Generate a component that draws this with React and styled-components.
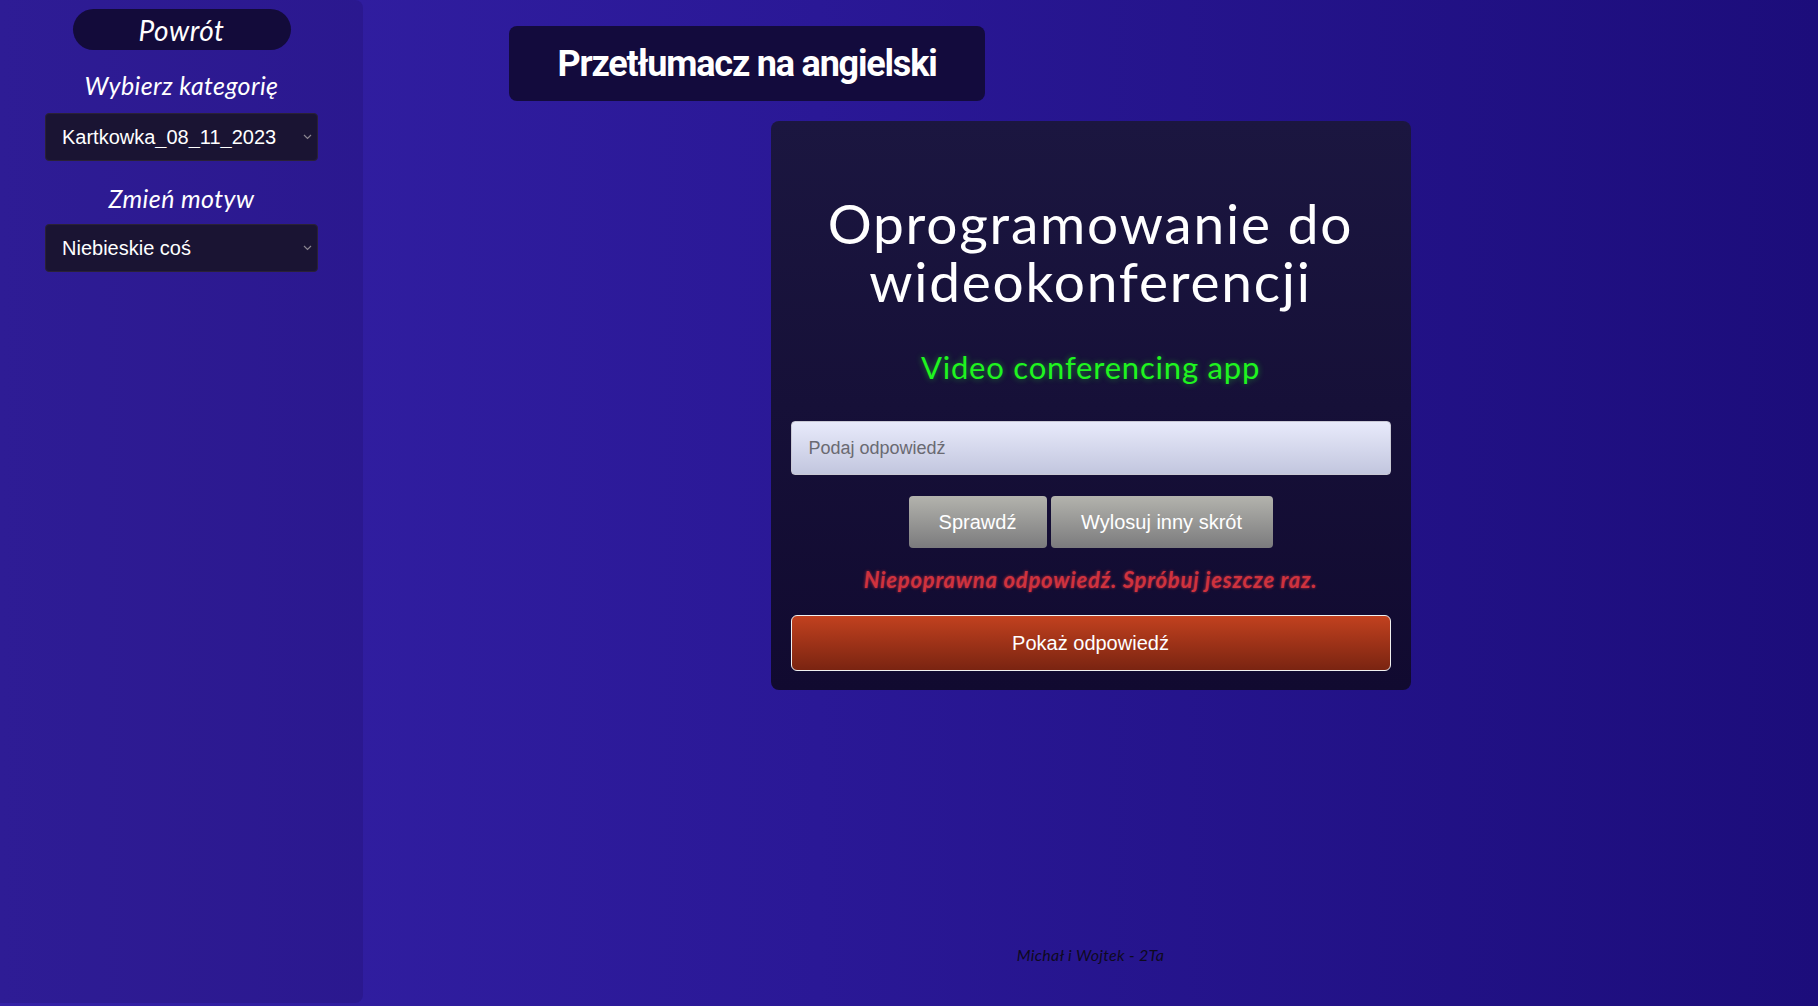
import React, { useState } from 'react';
import styled, { createGlobalStyle } from 'styled-components';

const GlobalStyle = createGlobalStyle`
  html, body {
    margin: 0;
    padding: 0;
    height: 100%;
  }

  body {
    background: linear-gradient(90deg, #3421a6 0%, #2a1896 45%, #1c0d7b 100%);
    font-family: "Liberation Sans", Arial, sans-serif;
    overflow: hidden;
  }
`;

const display = `"Lato", "Noto Sans", sans-serif`;

const Layout = styled.div`
  display: flex;
  height: 100vh;
`;

const Sidebar = styled.aside`
  flex: 0 0 363px;
  height: calc(100vh - 3px);
  display: flex;
  flex-direction: column;
  align-items: center;
  background: rgba(20, 8, 70, 0.18);
  border-radius: 0 8px 8px 0;
`;

const BackButton = styled.button`
  margin-top: 9px;
  width: 218px;
  height: 41px;
  border: none;
  border-radius: 21px;
  background: #130b3a;
  color: #ffffff;
  font-family: ${display};
  font-style: italic;
  font-size: 28px;
  letter-spacing: 0.5px;
  cursor: pointer;
`;

const SideLabel = styled.h3`
  margin: ${p => p.$top}px 0 ${p => p.$bottom}px;
  height: 30px;
  line-height: 30px;
  color: #ffffff;
  font-family: ${display};
  font-style: italic;
  font-weight: 400;
  font-size: 25px;
  letter-spacing: 0.4px;
`;

const SelectWrap = styled.div`
  position: relative;
  width: 273px;
  height: 48px;

  svg {
    position: absolute;
    right: 6px;
    top: 21px;
    pointer-events: none;
  }
`;

const Select = styled.select`
  appearance: none;
  width: 100%;
  height: 100%;
  padding: 0 16px;
  background: #1a1433;
  border: 1px solid #2a2136;
  border-radius: 4px;
  color: #ffffff;
  font-family: "Liberation Sans", Arial, sans-serif;
  font-size: 20px;
  outline: none;
`;

const Main = styled.main`
  flex: 1;
  display: flex;
  flex-direction: column;
  align-items: center;
`;

const TitleBox = styled.div`
  align-self: flex-start;
  margin: 26px 0 0 146px;
  width: 476px;
  height: 75px;
  display: flex;
  align-items: center;
  justify-content: center;
  background: #130b3d;
  border-radius: 8px;
  color: #ffffff;
  font-family: "Roboto", "Liberation Sans", sans-serif;
  font-weight: 700;
  font-size: 36px;
  letter-spacing: -1.2px;
`;

const Card = styled.section`
  margin-top: 20px;
  width: 640px;
  box-sizing: border-box;
  padding: 20px 20px 19px;
  display: flex;
  flex-direction: column;
  align-items: center;
  background: linear-gradient(180deg, #1b1640 0%, #110a30 100%);
  border-radius: 8px;
`;

const Term = styled.h1`
  margin: 53px 0 0;
  color: #ffffff;
  font-family: ${display};
  font-weight: 400;
  font-size: 55px;
  line-height: 58px;
  letter-spacing: 1.8px;
  text-align: center;
`;

const Translation = styled.h2`
  margin: 37px 0 0;
  height: 40px;
  line-height: 40px;
  color: #1ff51f;
  font-family: ${display};
  font-weight: 400;
  font-size: 31px;
  letter-spacing: 0.8px;
  text-shadow: 0 0 6px rgba(40, 255, 40, 0.45);
`;

const AnswerInput = styled.input`
  margin-top: 34px;
  width: 100%;
  height: 54px;
  box-sizing: border-box;
  padding: 0 17px;
  border: 1px solid #c8c8d4;
  border-radius: 4px;
  background: linear-gradient(180deg, #e8eafb 0%, #c2c6de 100%);
  font-family: "Liberation Sans", Arial, sans-serif;
  font-size: 18px;
  color: #222;
  outline: none;

  &::placeholder {
    color: #6a6a72;
  }
`;

const ButtonRow = styled.div`
  margin-top: 21px;
  display: flex;
  gap: 4px;
`;

const GrayButton = styled.button`
  width: ${p => p.$width}px;
  height: 52px;
  border: none;
  border-radius: 4px;
  background: linear-gradient(180deg, #b3b3ad 0%, #7b7b7d 100%);
  color: #ffffff;
  font-family: "Liberation Sans", Arial, sans-serif;
  font-size: 20px;
  cursor: pointer;
`;

const Feedback = styled.p`
  margin: 17px 0 0;
  height: 30px;
  line-height: 30px;
  color: #cf323e;
  font-family: ${display};
  font-style: italic;
  font-weight: 700;
  font-size: 22px;
  letter-spacing: 0.8px;
  text-shadow: 0 0 3px rgba(216, 52, 64, 0.8);
`;

const RevealButton = styled.button`
  margin-top: 20px;
  width: 100%;
  height: 56px;
  border: 1px solid #f0f0f0;
  border-radius: 6px;
  background: linear-gradient(180deg, #c2411f 0%, #7a2411 100%);
  color: #ffffff;
  font-family: "Liberation Sans", Arial, sans-serif;
  font-size: 20px;
  cursor: pointer;
`;

const Footer = styled.footer`
  margin-top: auto;
  margin-bottom: 42px;
  color: #0e0a1e;
  font-family: ${display};
  font-style: italic;
  font-size: 16px;
  letter-spacing: 0.3px;
`;

function Chevron() {
  return (
    <svg width="9" height="6" viewBox="0 0 9 6">
      <path d="M1 1l3.5 3.5L8 1" fill="none" stroke="#8a8590" strokeWidth="1.2" />
    </svg>
  );
}

export default function App() {
  const [answer, setAnswer] = useState('');

  return (
    <>
      <GlobalStyle />
      <Layout>
        <Sidebar>
          <BackButton>Powrót</BackButton>
          <SideLabel $top={20} $bottom={13}>Wybierz kategorię</SideLabel>
          <SelectWrap>
            <Select defaultValue="k">
              <option value="k">Kartkowka_08_11_2023</option>
            </Select>
            <Chevron />
          </SelectWrap>
          <SideLabel $top={22} $bottom={11}>Zmień motyw</SideLabel>
          <SelectWrap>
            <Select defaultValue="n">
              <option value="n">Niebieskie coś</option>
            </Select>
            <Chevron />
          </SelectWrap>
        </Sidebar>
        <Main>
          <TitleBox>Przetłumacz na angielski</TitleBox>
          <Card>
            <Term>Oprogramowanie do<br />wideokonferencji</Term>
            <Translation>Video conferencing app</Translation>
            <AnswerInput
              placeholder="Podaj odpowiedź"
              value={answer}
              onChange={e => setAnswer(e.target.value)}
            />
            <ButtonRow>
              <GrayButton $width={138}>Sprawdź</GrayButton>
              <GrayButton $width={222}>Wylosuj inny skrót</GrayButton>
            </ButtonRow>
            <Feedback>Niepoprawna odpowiedź. Spróbuj jeszcze raz.</Feedback>
            <RevealButton>Pokaż odpowiedź</RevealButton>
          </Card>
          <Footer>Michał i Wojtek - 2Ta</Footer>
        </Main>
      </Layout>
    </>
  );
}
